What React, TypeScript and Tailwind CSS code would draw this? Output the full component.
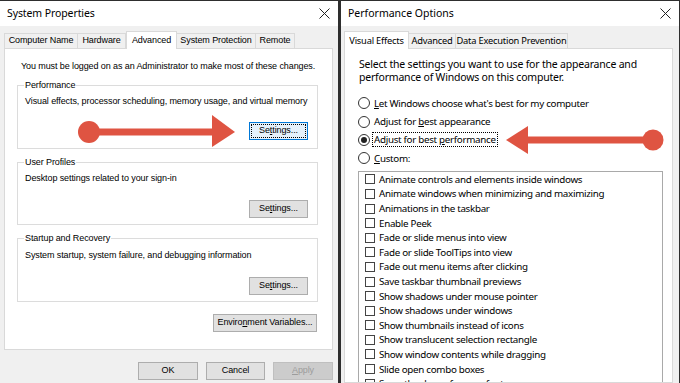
import React from 'react';

const SEGOE = 'font-["Noto_Sans",sans-serif]';
const TAHOMA = 'font-["Liberation_Sans",Arial,sans-serif]';

const effects = [
  'Animate controls and elements inside windows',
  'Animate windows when minimizing and maximizing',
  'Animations in the taskbar',
  'Enable Peek',
  'Fade or slide menus into view',
  'Fade or slide ToolTips into view',
  'Fade out menu items after clicking',
  'Save taskbar thumbnail previews',
  'Show shadows under mouse pointer',
  'Show shadows under windows',
  'Show thumbnails instead of icons',
  'Show translucent selection rectangle',
  'Show window contents while dragging',
  'Slide open combo boxes',
  'Smooth edges of screen fonts',
  'Smooth-scroll list boxes',
];

function TitleBar({ title }: { title: string }) {
  return (
    <div className={`h-[25px] bg-white flex items-center justify-between pl-[7px] pr-[7px] text-[10.5px] text-black ${SEGOE}`}>
      <span className="whitespace-nowrap">{title}</span>
      <svg width="11" height="11" viewBox="0 0 11 11" className="mr-[1px]">
        <path d="M0.5 0.5 L10.5 10.5 M10.5 0.5 L0.5 10.5" stroke="#222" strokeWidth="1" />
      </svg>
    </div>
  );
}

function Tab({ label, width, active }: { label: string; width: number; active?: boolean }) {
  if (active) {
    return (
      <div
        style={{ width }}
        className="relative z-10 -mb-px h-[18px] bg-white border border-b-0 border-[#d9d9d9] flex items-center justify-center whitespace-nowrap"
      >
        {label}
      </div>
    );
  }
  return (
    <div
      style={{ width }}
      className="h-[15px] bg-[#f0f0f0] border border-b-0 border-[#d9d9d9] -ml-px first:ml-0 flex items-center justify-center whitespace-nowrap"
    >
      {label}
    </div>
  );
}

function WinButton({
  children,
  width,
  focused,
  disabled,
}: {
  children: React.ReactNode;
  width: number;
  focused?: boolean;
  disabled?: boolean;
}) {
  const cls = disabled
    ? 'bg-[#cccccc] border-[#bfbfbf] text-[#9c9c9c]'
    : focused
      ? 'bg-[#e5f1fb] border-[#0078d7]'
      : 'bg-[#e1e1e1] border-[#adadad] text-black';
  return (
    <div style={{ width }} className={`h-[18px] border ${cls} flex items-center justify-center p-[1px] whitespace-nowrap`}>
      <div
        className={`w-full h-full flex items-center justify-center ${
          focused ? 'border border-dotted border-black' : ''
        }`}
      >
        {children}
      </div>
    </div>
  );
}

function Settings({ focused }: { focused?: boolean }) {
  return (
    <WinButton width={59} focused={focused}>
      <span>
        Se<u>t</u>tings...
      </span>
    </WinButton>
  );
}

function GroupBox({
  label,
  text,
  height,
  textTop,
  buttonTop,
  focused,
}: {
  label: string;
  text: string;
  height: number;
  textTop: number;
  buttonTop: number;
  focused?: boolean;
}) {
  return (
    <div style={{ height }} className="relative border border-[#dcdcdc] w-[301px]">
      <span className="absolute -top-[7px] left-[6px] bg-white px-[1px] leading-[12px] text-black whitespace-nowrap">
        {label}
      </span>
      <div style={{ paddingTop: textTop }} className="pl-[7px] leading-[12px] text-black whitespace-nowrap">
        {text}
      </div>
      <div style={{ top: buttonTop }} className="absolute right-[9px]">
        <Settings focused={focused} />
      </div>
    </div>
  );
}

function SystemProperties() {
  return (
    <div className={`w-[338px] h-full bg-[#f0f0f0] flex flex-col ${TAHOMA} text-[9px] tracking-[-0.1px]`}>
      <TitleBar title="System Properties" />
      <div className="flex items-end pl-[4px] mt-[5px]">
        <Tab label="Computer Name" width={74} />
        <Tab label="Hardware" width={49} />
        <Tab label="Advanced" width={51} active />
        <Tab label="System Protection" width={80} />
        <Tab label="Remote" width={40} />
      </div>
      <div className="ml-[4px] w-[329px] h-[302px] bg-white border border-[#d9d9d9] flex flex-col">
        <div className="pl-[16px] pt-[11px] leading-[12px] text-black whitespace-nowrap">
          You must be logged on as an Administrator to make most of these changes.
        </div>
        <div className="pl-[12px] pt-[13px] flex flex-col gap-[13px]">
          <GroupBox
            label="Performance"
            text="Visual effects, processor scheduling, memory usage, and virtual memory"
            height={64}
            textTop={9}
            buttonTop={36}
            focused
          />
          <GroupBox
            label="User Profiles"
            text="Desktop settings related to your sign-in"
            height={63}
            textTop={9}
            buttonTop={37}
          />
          <GroupBox
            label="Startup and Recovery"
            text="System startup, system failure, and debugging information"
            height={64}
            textTop={10}
            buttonTop={38}
          />
        </div>
        <div className="flex justify-end pr-[15px] pt-[12px]">
          <WinButton width={104}>
            <span>
              Enviro<u>n</u>ment Variables...
            </span>
          </WinButton>
        </div>
      </div>
      <div className="flex justify-end gap-[8px] pr-[5px] pt-[12px]">
        <WinButton width={60}>OK</WinButton>
        <WinButton width={59}>Cancel</WinButton>
        <WinButton width={60} disabled>
          <span>
            <u>A</u>pply
          </span>
        </WinButton>
      </div>
    </div>
  );
}

function Radio({ checked, children, focused }: { checked?: boolean; children: React.ReactNode; focused?: boolean }) {
  return (
    <div className="h-[18.4px] flex items-center">
      <span className="w-[12px] h-[12px] rounded-full border border-[#333] bg-white flex items-center justify-center">
        {checked && <span className="w-[6px] h-[6px] rounded-full bg-[#222]" />}
      </span>
      <span
        className={`ml-[2px] leading-[13px] px-[1px] whitespace-nowrap ${
          focused ? 'border border-dotted border-black' : 'border border-transparent'
        }`}
      >
        {children}
      </span>
    </div>
  );
}

function PerformanceOptions() {
  return (
    <div className={`w-[338px] h-full bg-[#f0f0f0] flex flex-col ${SEGOE} text-black`}>
      <TitleBar title="Performance Options" />
      <div className="flex items-end pl-[3px] mt-[5px] text-[9.3px] tracking-[-0.2px]">
        <Tab label="Visual Effects" width={65} active />
        <Tab label="Advanced" width={48} />
        <Tab label="Data Execution Prevention" width={113} />
      </div>
      <div className="ml-[3px] w-[329px] flex-1 bg-white border border-[#d9d9d9] pl-[13px] overflow-hidden">
        <div className="pt-[9px] pl-[1px] leading-[13px] text-[10.5px] tracking-[-0.2px] whitespace-nowrap">
          Select the settings you want to use for the appearance and
          <br />
          performance of Windows on this computer.
        </div>
        <div className="pt-[10px] text-[9.8px] tracking-[-0.3px]">
          <Radio>
            <u>L</u>et Windows choose what's best for my computer
          </Radio>
          <Radio>
            Adjust for <u>b</u>est appearance
          </Radio>
          <Radio checked focused>
            Adjust for best <u>p</u>erformance
          </Radio>
          <Radio>
            <u>C</u>ustom:
          </Radio>
        </div>
        <div className="mt-[3px] w-[305px] border border-[#a9a9a9] pt-[0.5px] text-[9.8px] tracking-[-0.3px]">
          {effects.map((e) => (
            <div key={e} className="h-[14.6px] flex items-center pl-[6px] whitespace-nowrap">
              <span className="w-[10px] h-[10px] border border-[#444] bg-white" />
              <span className="ml-[4px] leading-[13px]">{e}</span>
            </div>
          ))}
        </div>
      </div>
    </div>
  );
}

export default function App() {
  return (
    <div className="relative w-[680px] h-[383px] overflow-hidden bg-[#2e2e2e] pt-[1px] flex gap-[3px]">
      <SystemProperties />
      <PerformanceOptions />

      <svg className="absolute left-[78px] top-[115px]" width="160" height="33" viewBox="0 0 160 33">
        <circle cx="11" cy="17" r="11" fill="#df5442" />
        <rect x="11" y="13.5" width="126" height="7" fill="#df5442" />
        <polygon points="134,0 157,17 134,32" fill="#df5442" />
      </svg>

      <svg className="absolute left-[505px] top-[125px]" width="162" height="32" viewBox="0 0 162 32">
        <circle cx="148" cy="15" r="10.5" fill="#df5442" />
        <rect x="20" y="11.5" width="128" height="7" fill="#df5442" />
        <polygon points="23,1 1,15 23,29" fill="#df5442" />
      </svg>
    </div>
  );
}
